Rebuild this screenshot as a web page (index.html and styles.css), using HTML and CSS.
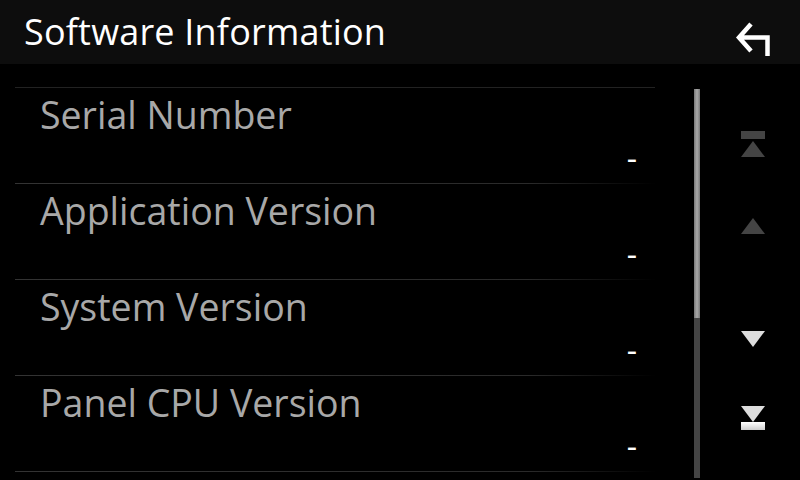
FILE: index.html
```html
<!DOCTYPE html>
<html lang="en">
<head>
	<meta charset="UTF-8">
	<title>Software Information</title>
	<link rel="stylesheet" href="styles.css">
</head>
<body>
	<div class="header">
		<div class="title">Software Information</div>
		<div class="back">
			<svg width="40" height="40" viewBox="0 0 40 40">
				<path d="M17 4 L5 17.5 L17 31 M6 17.5 H33.5 V36" fill="none" stroke="#fff" stroke-width="4.5" stroke-linejoin="miter"/>
			</svg>
		</div>
	</div>
	<div class="main">
		<div class="list">
			<div class="row">
				<div class="label">Serial Number</div>
				<div class="value">-</div>
			</div>
			<div class="row">
				<div class="label">Application Version</div>
				<div class="value">-</div>
			</div>
			<div class="row">
				<div class="label">System Version</div>
				<div class="value">-</div>
			</div>
			<div class="row">
				<div class="label">Panel CPU Version</div>
				<div class="value">-</div>
			</div>
		</div>
		<div class="scrollbar">
			<div class="thumb"></div>
		</div>
		<div class="arrows">
			<div class="arrow top off">
				<div class="bar"></div>
				<div class="tri up"></div>
			</div>
			<div class="arrow off">
				<div class="tri up"></div>
			</div>
			<div class="arrow on">
				<div class="tri down"></div>
			</div>
			<div class="arrow bottom on">
				<div class="tri down"></div>
				<div class="bar"></div>
			</div>
		</div>
	</div>
</body>
</html>
```

FILE: styles.css
```css
body{
	margin:0;
	width:800px;
	height:480px;
	overflow:hidden;
	background:#000;
	font-family:"Open Sans","Noto Sans",sans-serif;
}
.header{
	height:64px;
	background:#0d0d0d;
	display:flex;
	justify-content:space-between;
}
.title{
	color:#fff;
	font-size:36px;
	line-height:40px;
	padding:12px 0 0 24px;
	letter-spacing:0.2px;
}
.back{
	width:40px;
	height:40px;
	margin:20px 26px 0 0;
}
.main{
	display:flex;
	padding-top:23px;
}
.list{
	width:640px;
	margin-left:15px;
	border-top:1px solid #222;
}
.row{
	height:95px;
	border-bottom:1px solid #2a2a2a;
	border-image:linear-gradient(to right,#333 0%,#2a2a2a 80%,#000 100%) 1;
	display:flex;
	flex-direction:column;
}
.label{
	color:#a8a8a8;
	font-size:37.5px;
	line-height:40px;
	padding:7px 0 0 25px;
}
.value{
	color:#fff;
	font-size:32px;
	line-height:30px;
	text-align:right;
	padding-right:18px;
	margin-top:8px;
}
.scrollbar{
	width:6px;
	height:389px;
	margin:2px 0 0 39px;
	background:#444;
}
.thumb{
	height:229px;
	background:linear-gradient(to right,#777,#aaa,#777);
}
.arrows{
	flex:1;
	display:flex;
	flex-direction:column;
	align-items:center;
	padding-left:6px;
}
.arrow{
	width:24px;
	display:flex;
	flex-direction:column;
}
.arrow.top{
	margin-top:44px;
}
.arrow.top + .arrow{
	margin-top:61px;
}
.arrow.on{
	margin-top:97px;
}
.arrow.bottom{
	margin-top:59px;
}
.bar{
	height:8px;
	background:#444;
}
.on .bar{
	background:linear-gradient(#fff,#ccc);
}
.tri{
	width:0;
	height:0;
	border-left:12px solid transparent;
	border-right:12px solid transparent;
}
.tri.up{
	border-bottom:16px solid #444;
}
.top .tri.up{
	margin-top:2px;
}
.tri.down{
	border-top:16px solid #ddd;
}
```
